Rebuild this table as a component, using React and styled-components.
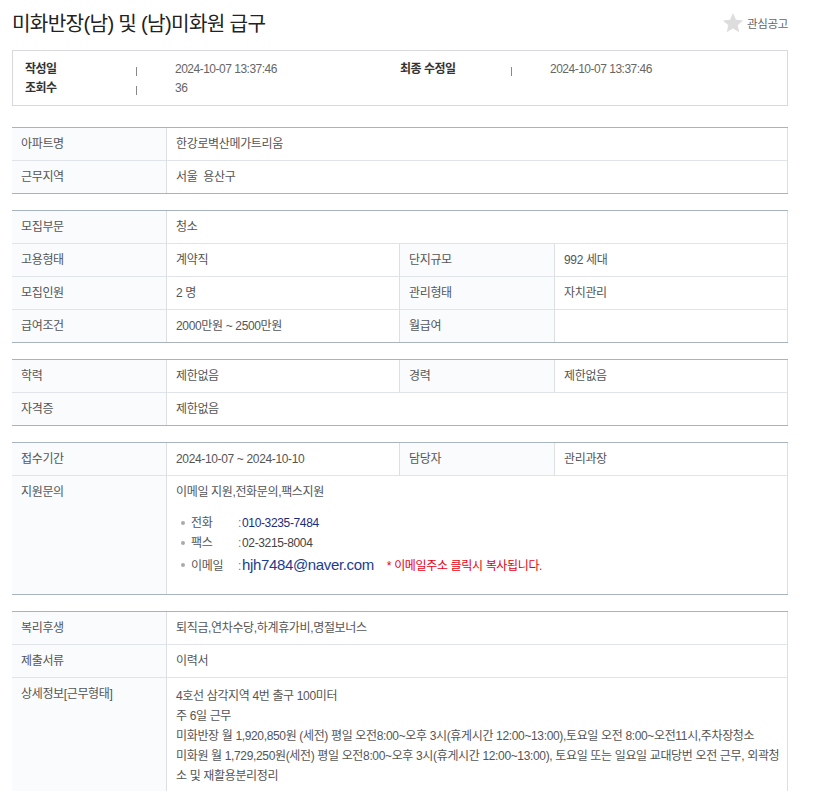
import React from 'react';
import styled, { createGlobalStyle } from 'styled-components';

const GlobalStyle = createGlobalStyle`
  html, body { margin: 0; padding: 0; background: #fff; }
  body {
    font-family: "Liberation Sans", "Noto Sans CJK KR", sans-serif;
    color: #555;
  }
  * { box-sizing: border-box; }
`;

const Page = styled.div`
  width: 819px;
  padding: 0 31px 0 12px;
`;

const Header = styled.header`
  display: flex;
  align-items: center;
  justify-content: space-between;
  height: 45px;
  margin-bottom: 5px;
`;

const Title = styled.h1`
  margin: 0;
  font-size: 20.2px;
  font-weight: 400;
  letter-spacing: -0.7px;
  color: #222;
`;

const FavButton = styled.button`
  display: flex;
  align-items: center;
  gap: 3px;
  padding: 0;
  border: none;
  background: none;
  font-family: inherit;
  font-size: 11.5px;
  letter-spacing: -0.3px;
  color: #666;
  cursor: pointer;
`;

const InfoBox = styled.div`
  display: grid;
  grid-template-columns: 111px 39px 225px 111px 39px 1fr;
  border: 1px solid #d8d8de;
  padding: 9px 12px 7px;
  font-size: 12px;
  line-height: 19px;
  letter-spacing: -0.5px;
`;

const InfoLabel = styled.span`
  font-weight: 700;
  color: #333;
`;

const InfoSep = styled.span`
  display: flex;
  align-items: center;
  &::before {
    content: "";
    display: block;
    width: 1px;
    height: 9px;
    margin-top: 3px;
    background: #888;
  }
`;

const InfoValue = styled.span`
  color: #666;
`;

const Table = styled.table`
  width: 776px;
  table-layout: fixed;
  border-collapse: separate;
  border-spacing: 0;
  margin-top: ${(p) => p.$gap}px;
  border-top: 1px solid #a8b3be;
  border-bottom: 1px solid #a8b3be;

  th, td {
    border-bottom: 1px solid #e0e3e7;
    border-right: 1px solid #dcdfe3;
    padding: 7px 9px;
    line-height: 18px;
    vertical-align: top;
    font-size: 12px;
    letter-spacing: -0.35px;
    color: #555;
    text-align: left;
    font-weight: 400;
  }
  tr:last-child > * { border-bottom: none; }
`;

const Col = styled.col`
  width: ${(p) => p.$w}px;
`;

const Label = styled.th`
  background: #f9fbfd;
`;

const Value = styled.td`
  background: #fff;
  line-height: ${(p) => (p.$tight ? 20 : 18)}px !important;
  padding-top: ${(p) => (p.$tight ? 8 : 7)}px !important;
  padding-bottom: ${(p) => (p.$pb ? p.$pb : 7)}px !important;
`;

const ContactList = styled.ul`
  list-style: none;
  margin: 12px 0 0;
  padding: 0;
`;

const ContactItem = styled.li`
  display: flex;
  align-items: baseline;
  height: ${(p) => p.$h}px;
  line-height: ${(p) => p.$h}px;
  padding-left: 5px;
  &::before {
    content: "";
    display: inline-block;
    width: 4px;
    height: 4px;
    border-radius: 50%;
    background: #aaa;
    margin-right: 6px;
    align-self: center;
  }
`;

const ContactKey = styled.span`
  width: 47px;
  color: #555;
`;

const Colon = styled.span`
  color: #777;
  margin-right: 1px;
`;

const ContactVal = styled.span`
  color: ${(p) => p.$color};
  font-size: ${(p) => p.$size || 12}px;
`;

const Note = styled.span`
  margin-left: 13px;
  color: #e60012;
  font-size: 12px;
`;

const Line = styled.div`
  white-space: nowrap;
`;

const Star = () => (
  <svg width="22" height="22" viewBox="0 0 24 24" aria-hidden="true">
    <path
      d="M12 1.2l3.2 7.3 7.9.7-6 5.2 1.8 7.8L12 18.1l-6.9 4.1 1.8-7.8-6-5.2 7.9-.7z"
      fill="#dddddd"
    />
  </svg>
);

const Cols = () => (
  <colgroup>
    <Col $w={155} />
    <Col $w={233} />
    <Col $w={155} />
    <Col $w={233} />
  </colgroup>
);

const Row = ({ cells }) => (
  <tr>
    {cells.map(([l, v], i) => (
      <React.Fragment key={i}>
        <Label>{l}</Label>
        <Value colSpan={cells.length === 1 ? 3 : 1}>{v}</Value>
      </React.Fragment>
    ))}
  </tr>
);

const sections = [
  [
    [['아파트명', '한강로벽산메가트리움']],
    [['근무지역', '서울\u00a0\u00a0용산구']],
  ],
  [
    [['모집부문', '청소']],
    [['고용형태', '계약직'], ['단지규모', '992 세대']],
    [['모집인원', '2 명'], ['관리형태', '자치관리']],
    [['급여조건', '2000만원 ~ 2500만원'], ['월급여', '']],
  ],
  [
    [['학력', '제한없음'], ['경력', '제한없음']],
    [['자격증', '제한없음']],
  ],
];

export default function App() {
  return (
    <>
      <GlobalStyle />
      <Page>
        <Header>
          <Title>미화반장(남) 및 (남)미화원 급구</Title>
          <FavButton type="button">
            <Star />
            관심공고
          </FavButton>
        </Header>

        <InfoBox>
          <InfoLabel>작성일</InfoLabel>
          <InfoSep />
          <InfoValue>2024-10-07 13:37:46</InfoValue>
          <InfoLabel>최종 수정일</InfoLabel>
          <InfoSep />
          <InfoValue>2024-10-07 13:37:46</InfoValue>
          <InfoLabel>조회수</InfoLabel>
          <InfoSep />
          <InfoValue>36</InfoValue>
        </InfoBox>

        {sections.map((rows, si) => (
          <Table key={si} $gap={si === 0 ? 21 : 16}>
            <Cols />
            <tbody>
              {rows.map((cells, ri) => (
                <Row key={ri} cells={cells} />
              ))}
            </tbody>
          </Table>
        ))}

        <Table $gap={16}>
          <Cols />
          <tbody>
            <Row cells={[['접수기간', '2024-10-07 ~ 2024-10-10'], ['담당자', '관리과장']]} />
            <tr>
              <Label>지원문의</Label>
              <Value colSpan={3} $pb={17}>
                이메일 지원,전화문의,팩스지원
                <ContactList>
                  <ContactItem $h={20}>
                    <ContactKey>전화</ContactKey>
                    <Colon>:</Colon>
                    <ContactVal $color="#1d2b7c">010-3235-7484</ContactVal>
                  </ContactItem>
                  <ContactItem $h={20}>
                    <ContactKey>팩스</ContactKey>
                    <Colon>:</Colon>
                    <ContactVal $color="#444">02-3215-8004</ContactVal>
                  </ContactItem>
                  <ContactItem $h={24}>
                    <ContactKey>이메일</ContactKey>
                    <Colon>:</Colon>
                    <ContactVal $color="#1b3d8f" $size={15}>hjh7484@naver.com</ContactVal>
                    <Note>* 이메일주소 클릭시 복사됩니다.</Note>
                  </ContactItem>
                </ContactList>
              </Value>
            </tr>
          </tbody>
        </Table>

        <Table $gap={16}>
          <Cols />
          <tbody>
            <Row cells={[['복리후생', '퇴직금,연차수당,하계휴가비,명절보너스']]} />
            <Row cells={[['제출서류', '이력서']]} />
            <tr>
              <Label>상세정보[근무형태]</Label>
              <Value colSpan={3} $tight>
                <Line>4호선 삼각지역 4번 출구 100미터</Line>
                <Line>주 6일 근무</Line>
                <Line>미화반장 월 1,920,850원 (세전) 평일 오전8:00~오후 3시(휴게시간 12:00~13:00),토요일 오전 8:00~오전11시,주차장청소</Line>
                <Line>미화원 월 1,729,250원(세전) 평일 오전8:00~오후 3시(휴게시간 12:00~13:00), 토요일 또는 일요일 교대당번 오전 근무, 외곽청</Line>
                <Line>소 및 재활용분리정리</Line>
                <Line>&nbsp;</Line>
              </Value>
            </tr>
          </tbody>
        </Table>
      </Page>
    </>
  );
}
